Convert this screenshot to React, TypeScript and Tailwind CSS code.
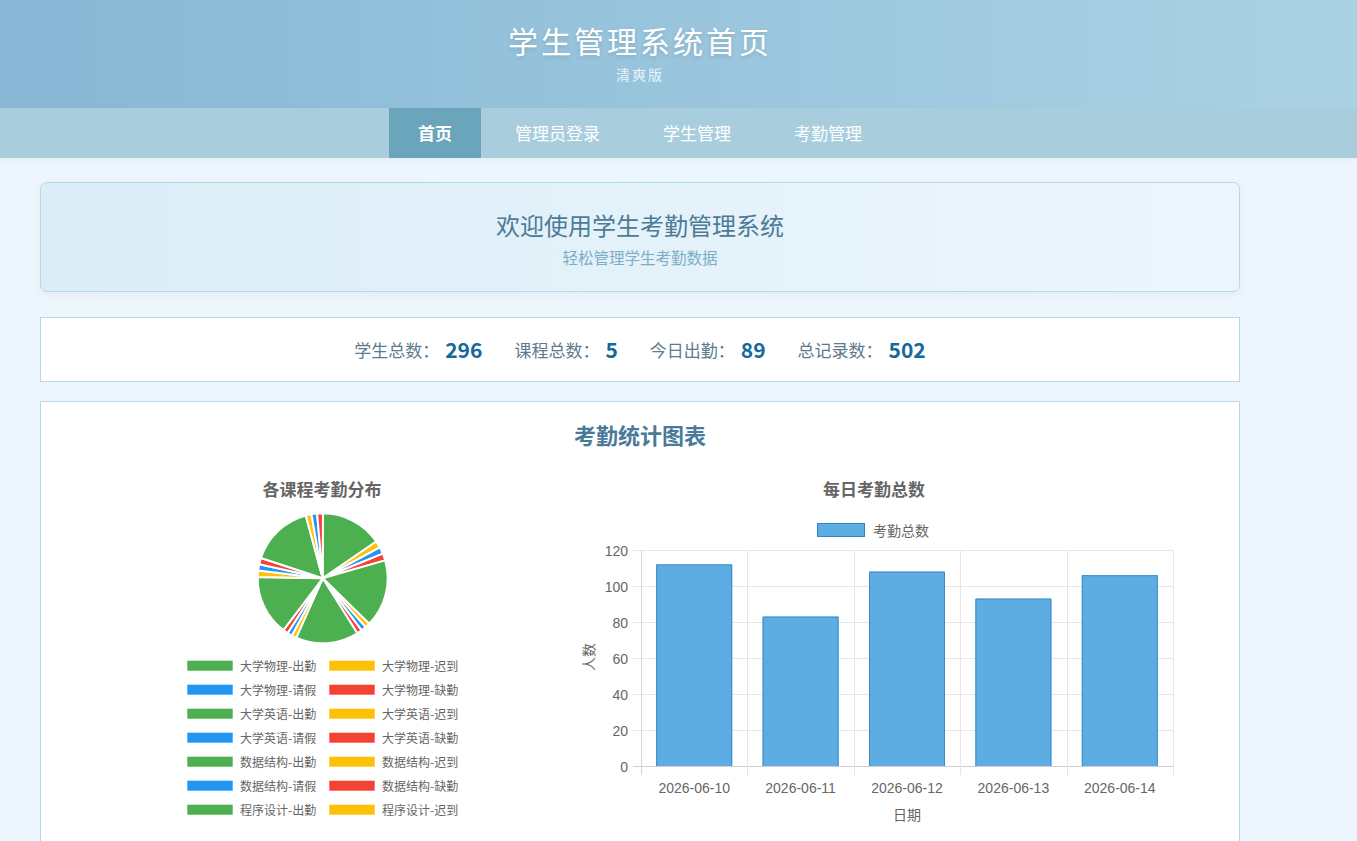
import React from "react";

const CJK = '"Noto Sans CJK SC", "Liberation Sans", sans-serif';
const LAT = '"Liberation Sans", "Noto Sans CJK SC", sans-serif';

const G = "#4caf50";
const Y = "#ffc107";
const B = "#2196f3";
const R = "#f44336";

// slice sizes in degrees, in legend order
const slices: [number, string][] = [
  [55.5, G], [6, Y], [6.2, B], [6.3, R],
  [60.4, G], [4.4, Y], [4.5, B], [4.5, R],
  [56.2, G], [4.3, Y], [4.3, B], [4.6, R],
  [54, G], [5.6, Y], [5.7, B], [5.7, R],
  [56.7, G], [5.1, Y], [5.1, B], [5.1, R],
];

const legend: [string, string][] = [
  ["大学物理-出勤", G], ["大学物理-迟到", Y],
  ["大学物理-请假", B], ["大学物理-缺勤", R],
  ["大学英语-出勤", G], ["大学英语-迟到", Y],
  ["大学英语-请假", B], ["大学英语-缺勤", R],
  ["数据结构-出勤", G], ["数据结构-迟到", Y],
  ["数据结构-请假", B], ["数据结构-缺勤", R],
  ["程序设计-出勤", G], ["程序设计-迟到", Y],
  ["程序设计-请假", B], ["程序设计-缺勤", R],
];

const wedge = (cx: number, cy: number, r: number, a0: number, a1: number) => {
  const pt = (a: number) => {
    const rad = (a * Math.PI) / 180;
    return `${(cx + r * Math.sin(rad)).toFixed(2)},${(cy - r * Math.cos(rad)).toFixed(2)}`;
  };
  const large = a1 - a0 > 180 ? 1 : 0;
  return `M${cx},${cy} L${pt(a0)} A${r},${r} 0 ${large} 1 ${pt(a1)} Z`;
};

const ChartTitle = ({ children }: { children: React.ReactNode }) => (
  <h4 className="text-center text-[17px] font-bold leading-[22px] text-[#666]">{children}</h4>
);

const PieChart = () => {
  let acc = 0;
  const cx = 250.7;
  const cy = 100.3;
  return (
    <div className="w-[500px] shrink-0">
      <ChartTitle>各课程考勤分布</ChartTitle>
      <svg width={500} height={328} className="block">
        <g transform="translate(0,-22)">
          {slices.map(([deg, color], i) => {
            const a0 = acc;
            acc += deg;
            return <path key={i} d={wedge(cx, cy, 65, a0, acc)} fill={color} stroke="#fff" strokeWidth={2} strokeLinejoin="round" />;
          })}
          {legend.map(([label, color], i) => {
            const col = i % 2;
            const row = Math.floor(i / 2);
            const y = 187.7 + row * 24;
            const bx = col === 0 ? 115.3 : 257.3;
            return (
              <g key={label}>
                <rect x={bx} y={y - 5} width={45.4} height={10} fill={color} />
                <text x={bx + 52.7} y={y} dominantBaseline="central" fontFamily={CJK} fontSize={12} fill="#666">
                  {label}
                </text>
              </g>
            );
          })}
        </g>
      </svg>
    </div>
  );
};

const bars = [
  { day: "2026-06-10", v: 112 },
  { day: "2026-06-11", v: 83 },
  { day: "2026-06-12", v: 108 },
  { day: "2026-06-13", v: 93 },
  { day: "2026-06-14", v: 106 },
];

const BarChart = () => {
  const x0 = 67;
  const x1 = 599;
  const yTop = 72;
  const yBot = 288;
  const cw = (x1 - x0) / 5;
  const ticks = [0, 20, 40, 60, 80, 100, 120];
  return (
    <div className="w-[600px] shrink-0">
      <ChartTitle>每日考勤总数</ChartTitle>
      <svg width={600} height={328} className="block">
        <g transform="translate(0,-22)">
          <rect x={243.5} y={45.5} width={47} height={13} fill="#5dade2" stroke="#2e86c1" />
          <text x={299} y={52} dominantBaseline="central" fontFamily={CJK} fontSize={14} fill="#666">
            考勤总数
          </text>

          {ticks.map((t) => {
            const y = yBot - t * 1.8 + 0.5;
            return (
              <g key={t}>
                <line x1={59} x2={x1} y1={y} y2={y} stroke={t === 0 ? "#cfcfcf" : "#e6e6e6"} />
                <text x={54} y={y} textAnchor="end" dominantBaseline="central" fontFamily={LAT} fontSize={14} fill="#666">
                  {t}
                </text>
              </g>
            );
          })}
          {[0, 1, 2, 3, 4, 5].map((i) => {
            const x = Math.round(x0 + i * cw) + 0.5;
            return <line key={i} x1={x} x2={x} y1={yTop} y2={297} stroke={i === 0 ? "#d6d6d6" : "#e6e6e6"} />;
          })}

          {bars.map((b, i) => {
            const c = x0 + cw * (i + 0.5);
            const top = yBot - b.v * 1.8;
            const l = c - 38;
            const r = c + 38;
            return (
              <g key={b.day}>
                <rect x={l} y={top} width={76} height={yBot - top} fill="#5dade2" />
                <path d={`M${l + 0.5},${yBot} L${l + 0.5},${top + 0.5} L${r - 0.5},${top + 0.5} L${r - 0.5},${yBot}`} fill="none" stroke="#3a8cc6" />
                <text x={c} y={310} textAnchor="middle" dominantBaseline="central" fontFamily={LAT} fontSize={14} fill="#666">
                  {b.day}
                </text>
              </g>
            );
          })}

          <text x={333} y={336} textAnchor="middle" dominantBaseline="central" fontFamily={CJK} fontSize={14} fill="#666">
            日期
          </text>
          <text x={14} y={179} textAnchor="middle" dominantBaseline="central" fontFamily={CJK} fontSize={14} fill="#666" transform="rotate(-90 14 179)">
            人数
          </text>
        </g>
      </svg>
    </div>
  );
};

const stats = [
  { label: "学生总数：", value: "296" },
  { label: "课程总数：", value: "5" },
  { label: "今日出勤：", value: "89" },
  { label: "总记录数：", value: "502" },
];

const navItems = ["首页", "管理员登录", "学生管理", "考勤管理"];

export default function App() {
  return (
    <div className="min-h-screen bg-[#eef6fd]" style={{ fontFamily: CJK }}>
      <header className="h-[108px] bg-gradient-to-r from-[#87b7d5] to-[#abd2e4]">
        <div className="w-[1280px] pt-[20px] text-center">
          <h1 className="text-[30px] leading-[40px] tracking-[3px] text-white [text-shadow:0_2px_4px_rgba(0,0,0,0.12)]">
            学生管理系统首页
          </h1>
          <p className="mt-[4px] text-[14px] leading-[20px] tracking-[2px] text-[#eaf4fa]">清爽版</p>
        </div>
      </header>

      <nav className="h-[50px] bg-[#a8cedd] shadow-[0_2px_4px_rgba(0,0,0,0.04)]">
        <ul className="flex h-full w-[1280px] justify-center gap-[5px]">
          {navItems.map((item, i) => (
            <li
              key={item}
              className={
                i === 0
                  ? "flex h-full items-center bg-[#6aa5bb] px-[29px] text-[17px] font-bold text-white"
                  : "flex h-full items-center px-[29px] text-[17px] text-white"
              }
            >
              {item}
            </li>
          ))}
        </ul>
      </nav>

      <main className="ml-[40px] w-[1200px] pt-[24px]">
        <section className="h-[110px] rounded-[7px] border border-[#b4d9e8] bg-gradient-to-r from-[#dbedf7] to-[#edf6fc] pt-[26px] text-center shadow-[0_2px_8px_rgba(0,0,0,0.05)]">
          <h2 className="text-[24px] leading-[32px] text-[#4b7b98]">欢迎使用学生考勤管理系统</h2>
          <p className="mt-[5px] text-[15.5px] leading-[22px] text-[#7badc8]">轻松管理学生考勤数据</p>
        </section>

        <section className="mt-[25px] flex h-[65px] items-center justify-center gap-[32px] border border-[#b4d9e8] bg-white">
          {stats.map((s) => (
            <div key={s.label} className="flex items-center">
              <span className="text-[17px] text-[#5d7b8e]">{s.label}</span>
              <span className="ml-[6px] text-[21px] font-bold text-[#17699b]">{s.value}</span>
            </div>
          ))}
        </section>

        <section className="mt-[19px] border border-[#b4d9e8] bg-white pt-[17px] pb-[20px]">
          <h3 className="text-center text-[22px] font-bold leading-[30px] text-[#4a7a99]">考勤统计图表</h3>
          <div className="mt-[29px] flex gap-[2px] pl-[31px]">
            <PieChart />
            <BarChart />
          </div>
        </section>
      </main>
    </div>
  );
}
